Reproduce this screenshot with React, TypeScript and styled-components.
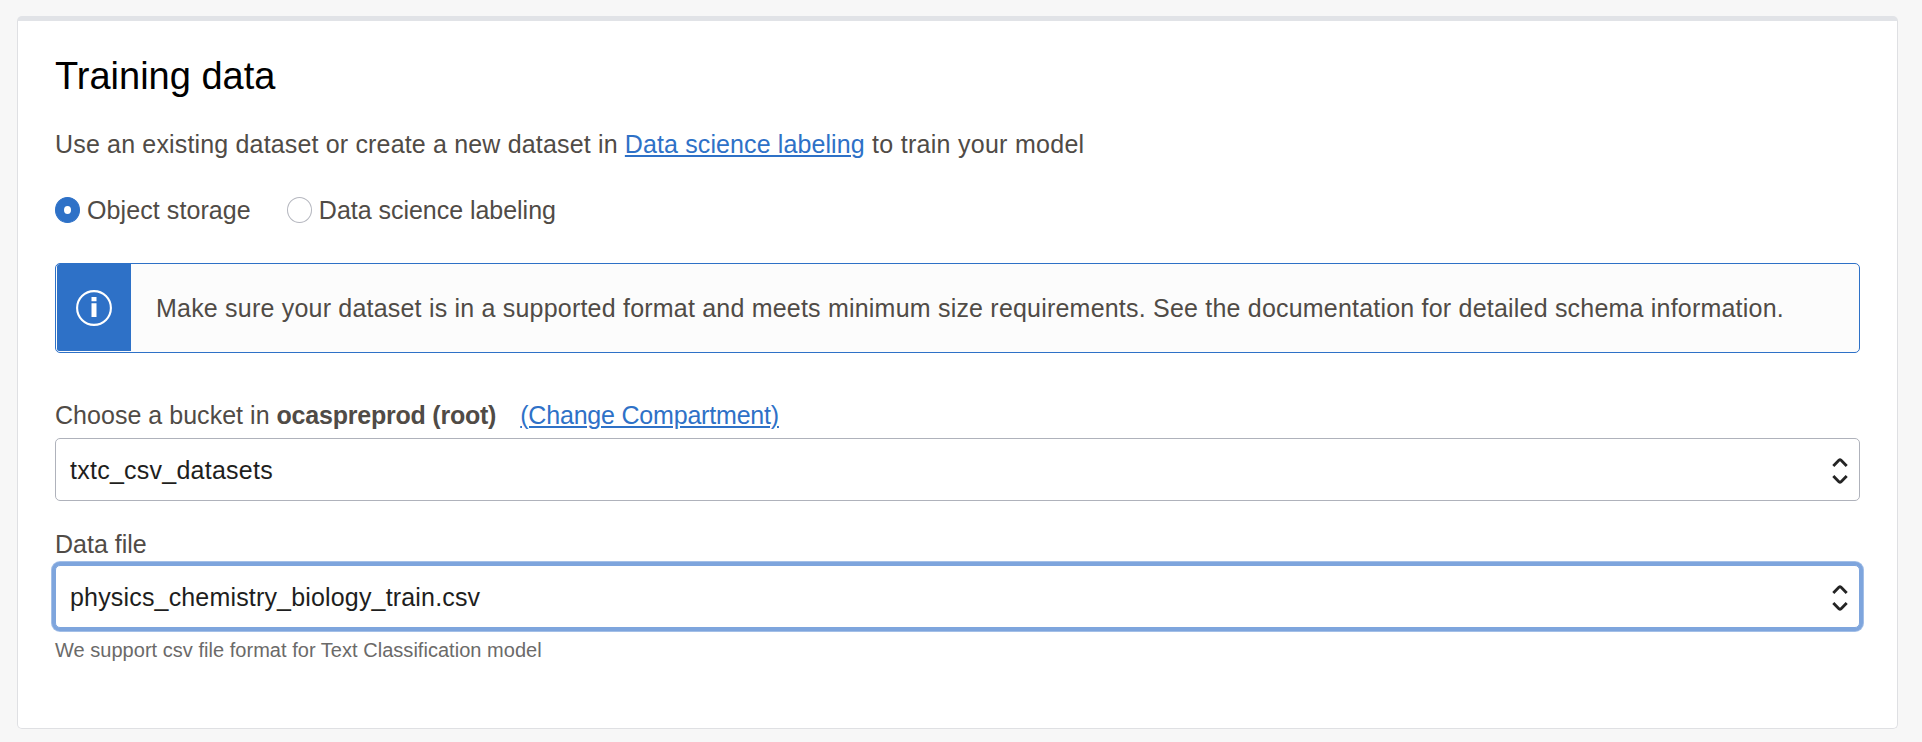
import React from "react";
import styled, { createGlobalStyle, css } from "styled-components";

const blue = "#2e71c7";
const ink = "#504b46";

const GlobalStyle = createGlobalStyle`
  *, *::before, *::after { box-sizing: border-box; }
  body {
    margin: 0;
    background: #f7f7f7;
    color: ${ink};
    font: 25px/30px "Liberation Sans", Arial, sans-serif;
  }
`;

const Page = styled.main`
  padding: 16px 24px 13px 17px;
`;

const Card = styled.section`
  height: 713px;
  padding: 33px 37px 0;
  background: #fff;
  border: 1px solid #dfe0e3;
  border-top: 5px solid #e1e3e7;
  border-radius: 5px;
`;

const Title = styled.h1`
  margin: 0;
  color: #000;
  font-size: 38px;
  font-weight: 400;
  line-height: 44px;
`;

const Text = styled.span<{ $track?: number }>`
  letter-spacing: ${(p) => p.$track ?? 0}px;
  white-space: pre;
`;

const Link = styled.a<{ $track?: number }>`
  color: ${blue};
  letter-spacing: ${(p) => p.$track ?? 0}px;
  text-decoration: underline;
  text-decoration-thickness: 2px;
  text-underline-offset: 2px;
  white-space: nowrap;
  cursor: pointer;
`;

const Intro = styled.p`
  margin: 31px 0 0;
`;

const RadioGroup = styled.div`
  display: flex;
  gap: 36px;
  margin-top: 36px;
`;

const RadioOption = styled.label`
  display: flex;
  gap: 7px;
`;

const RadioMark = styled.span<{ $checked?: boolean }>`
  display: flex;
  align-items: center;
  justify-content: center;
  flex: none;
  width: 25px;
  height: 26px;
  margin-top: 2px;
  border: 1px solid #b5b7bf;
  border-radius: 50%;
  background: #fff;
  ${(p) =>
    p.$checked &&
    css`
      border-color: ${blue};
      background: ${blue};
      &::after {
        content: "";
        width: 7px;
        height: 8px;
        border-radius: 50%;
        background: #fff;
      }
    `}
`;

const Alert = styled.div`
  display: flex;
  height: 90px;
  margin-top: 38px;
  border: 1px solid ${blue};
  border-radius: 5px;
  background: #fcfcfc;
`;

const AlertIcon = styled.div`
  display: flex;
  align-items: center;
  justify-content: center;
  width: 74px;
  height: 87px;
  margin-left: 1px;
  padding-top: 1px;
  border-radius: 3px 0 0 2px;
  background: ${blue};
`;

const AlertText = styled.div`
  display: flex;
  align-items: center;
  padding-left: 25px;
`;

const FieldLabel = styled.div<{ $top: number; $bottom: number }>`
  display: flex;
  margin: ${(p) => p.$top}px 0 ${(p) => p.$bottom}px;
`;

const Compartment = styled.strong`
  margin-right: 24px;
  font-weight: 700;
  letter-spacing: -0.22px;
`;

const Select = styled.div<{ $focused?: boolean }>`
  display: flex;
  align-items: flex-start;
  justify-content: space-between;
  height: 63px;
  padding: 16px 11px 0 14px;
  border: 1px solid ${(p) => (p.$focused ? "#7ea5dd" : "#afb2bb")};
  border-radius: 5px;
  background: #fff;
  color: #1e1e20;
  ${(p) => p.$focused && "box-shadow: 0 0 0 3px #7ea5dd, 0 0 0 4px #a3bfe7;"}
`;

const ChevronSvg = styled.svg`
  flex: none;
  margin-top: 2px;
`;

const Help = styled.div`
  margin-top: 10px;
  color: #6b6a69;
  font-size: 20px;
  line-height: 24px;
  letter-spacing: 0.03px;
`;

const InfoIcon = () => (
  <svg width="36" height="36" viewBox="0 0 36 36" fill="none">
    <circle cx="18" cy="18" r="16.9" stroke="#fff" strokeWidth="2.1" />
    <path d="M15.5 7h5v4.3h-5zM15.5 13.2h5V27h-5z" fill="#fff" />
  </svg>
);

const Chevrons = () => (
  <ChevronSvg width="16" height="28" viewBox="0 0 16 28" fill="none">
    <path
      d="M1.3 9 7.1 3.1Q8 2.4 8.9 3.1L14.7 9M1.3 19l5.8 5.9q.9.7 1.8 0L14.7 19"
      stroke="#242424"
      strokeWidth="2.9"
    />
  </ChevronSvg>
);

export default function App() {
  return (
    <>
      <GlobalStyle />
      <Page>
        <Card>
          <Title>Training data</Title>
          <Intro>
            <Text $track={0.165}>{"Use an existing dataset or create a new dataset in "}</Text>
            <Link $track={0.11}>Data science labeling</Link>
            <Text $track={0.28}> to train your model</Text>
          </Intro>
          <RadioGroup>
            <RadioOption>
              <RadioMark $checked />
              <Text $track={0.09}>Object storage</Text>
            </RadioOption>
            <RadioOption>
              <RadioMark />
              <Text $track={-0.03}>Data science labeling</Text>
            </RadioOption>
          </RadioGroup>
          <Alert>
            <AlertIcon>
              <InfoIcon />
            </AlertIcon>
            <AlertText>
              <Text $track={0.205}>
                Make sure your dataset is in a supported format and meets minimum size
                requirements. See the documentation for detailed schema information.
              </Text>
            </AlertText>
          </Alert>
          <FieldLabel $top={47} $bottom={8}>
            <Text $track={0.03}>{"Choose a bucket in "}</Text>
            <Compartment>ocaspreprod (root)</Compartment>
            <Link $track={-0.195}>(Change Compartment)</Link>
          </FieldLabel>
          <Select>
            <Text $track={0.25}>txtc_csv_datasets</Text>
            <Chevrons />
          </Select>
          <FieldLabel $top={28} $bottom={6}>
            Data file
          </FieldLabel>
          <Select $focused>
            <Text $track={0.17}>physics_chemistry_biology_train.csv</Text>
            <Chevrons />
          </Select>
          <Help>We support csv file format for Text Classification model</Help>
        </Card>
      </Page>
    </>
  );
}
